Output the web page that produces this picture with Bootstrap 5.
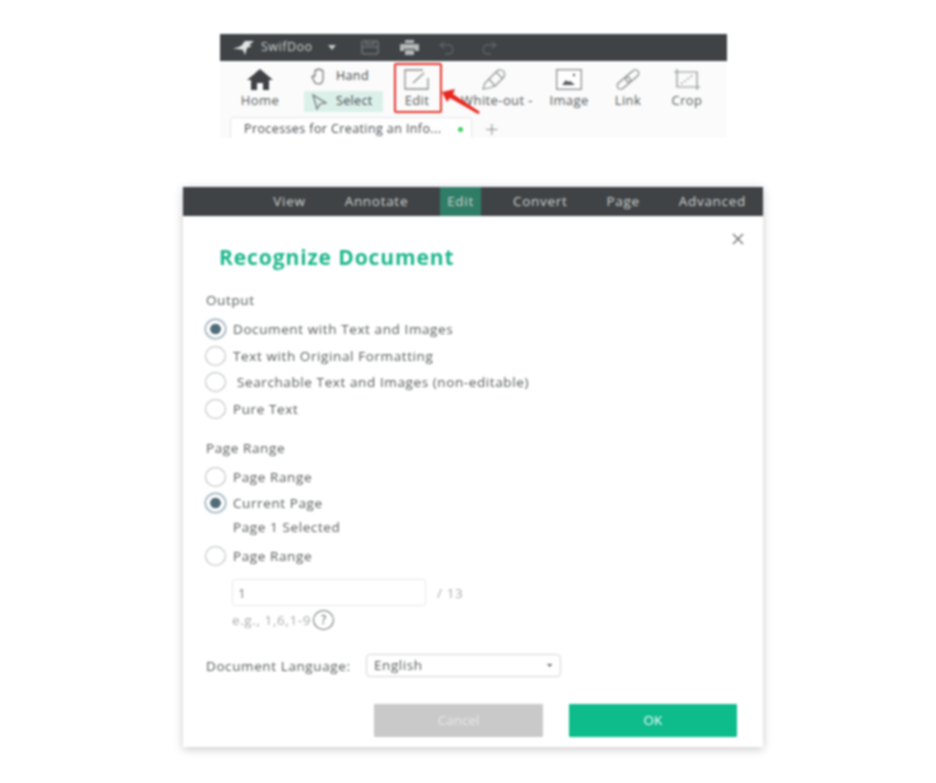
<!DOCTYPE html>
<html lang="en">
<head>
    <meta charset="UTF-8">
    <meta content="width=device-width, initial-scale=1.0" name="viewport">
    <title>Recognize Document</title>
    <link href="https://cdn.jsdelivr.net/npm/bootstrap@5.3.0/dist/css/bootstrap.min.css" rel="stylesheet">
    <style>
        body {
            background: #fff;
            color: #55585a;
            font-family: "Open Sans", "Liberation Sans", sans-serif;
            font-size: 13.5px;
            letter-spacing: .6px;
            overflow: hidden;
        }
        .shot-wrap { filter: blur(.8px); padding-top: 34px; height: 783px; }
        .app-top { width: 507px; margin-left: 220px; position: relative; height: 104px; background: #fbfbfb; overflow: visible; }
        .title-bar { height: 27px; background: #3f4345; color: #c9cbcb; padding-left: 13px; }
        .title-bar svg { display: block; }
        .ribbon-grid { display: grid; grid-template-columns: 80px 84px 66px 94px 50px 68px 50px; height: 54px; }
        .tool-item { display: flex; flex-direction: column; align-items: center; justify-content: flex-end; gap: 2px; padding-bottom: 6px; font-size: 13px; letter-spacing: .4px; line-height: 17px; color: #55585a; white-space: nowrap; }
        .tool-pair { display: flex; flex-direction: column; padding: 5px 0 0 4px; gap: 4px; font-size: 12.5px; letter-spacing: .35px; }
        .tool-row { display: flex; align-items: center; gap: 9px; height: 21px; width: 79px; padding-left: 5px; color: #44474a; }
        .tool-row.is-on { background: #dcf0ea; }
        .doc-tab { width: 242px; height: 21px; margin: 2px 0 0 10px; background: #fff; border: 1px solid #e6e6e6; border-bottom: 0; border-radius: 4px 4px 0 0; padding: 3px 8px 0 13px; font-size: 12.5px; letter-spacing: .4px; color: #44474a; white-space: nowrap; }
        .tab-dot { width: 5px; height: 5px; border-radius: 50%; background: #3ccf5c; }
        .tab-plus { font-size: 24px; line-height: 27px; color: #8b8d8e; margin-left: 13px; font-weight: 300; }
        .red-box { position: absolute; left: 174px; top: 29px; width: 48px; height: 50px; border: 2px solid #e5332c; border-radius: 2px; }
        .red-arrow { position: absolute; left: 222px; top: 55px; }

        .dialog-wrap { width: 580px; height: 560px; margin-left: 183px; margin-top: 49px; background: #fff; box-shadow: 0 2px 9px rgba(0, 0, 0, .22); }
        .menu-bar { height: 29px; background: #3f4345; color: #cfd1d1; padding-right: 10px; gap: 25px; letter-spacing: .7px; }
        .menu-item { padding: 0 7px; line-height: 29px; }
        .menu-item.is-active { background: #2f7d66; }
        .dialog-body { padding: 0 22px; position: relative; }
        .dialog-title { color: #1eb78d; font-size: 21px; font-weight: 700; margin: 0; padding: 28px 0 0 14px; line-height: 26px; letter-spacing: .9px; }
        .close-mark { position: absolute; right: 19px; top: 17px; }
        .group-label { line-height: 18px; margin: 0 0 0 1px; }
        .radio-line { display: flex; align-items: center; gap: 7px; min-height: 20px; margin-bottom: 6.6px; padding-left: 0; }
        .radio-line .form-check-input { width: 21px; height: 20px; margin: 0; float: none; flex: none; border: 1.5px solid #b9bcbd; background-color: #fff; }
        .radio-line .form-check-input:checked { border-color: #8ea2ab; background-color: #fff; background-image: radial-gradient(circle, #4f6c79 0 5px, transparent 5.6px); box-shadow: 0 0 0 1px #d3dde0; }
        .radio-line .form-check-label { color: #55585a; line-height: 20px; }
        .indent-left { margin-left: 27px; }
        .range-input { width: 194px; height: 27px; padding: 0 5px; font-size: 13.5px; letter-spacing: .5px; color: #7d8081; border-color: #e8e8e8; border-radius: 3px; }
        .muted-note { color: #a9abac; }
        .help-mark { width: 21px; height: 20px; border: 1.5px solid #6d7072; border-radius: 50%; font-size: 12px; letter-spacing: 0; line-height: 17px; text-align: center; color: #55585a; margin-left: 2px; }
        .lang-select { width: 195px; height: 23px; padding: 0 7px; font-size: 13.5px; letter-spacing: .55px; line-height: 21px; color: #55585a; border-color: #d5d5d5; border-radius: 4px; background-image: linear-gradient(45deg, transparent 50%, #666 50%), linear-gradient(-45deg, transparent 50%, #666 50%); background-size: 3px 3px, 3px 3px; background-position: right 10px center, right 7px center; }
        .dlg-btn { height: 33px; border: 0; border-radius: 1px; font-size: 13.5px; padding: 0; line-height: 33px; color: #fff; }
        .dlg-btn.is-cancel, .dlg-btn.is-cancel:disabled { width: 169px; background: #c9c9c9; color: #e8e8e8; opacity: 1; }
        .dlg-btn.is-ok { width: 168px; background: #0dbb8b; }
    </style>
</head>
<body>
<div class="shot-wrap">
    <div class="app-top">
        <div class="title-bar d-flex align-items-center">
            <svg width="22" height="16" viewBox="0 0 22 16"><path d="M0 9 8 6 12 1 21 1 16 5 19 6 14 8 12 15 10 10 5 9Z" fill="#e2e3e3"/></svg>
            <span style="margin-left:6px;font-size:12.5px;letter-spacing:.5px">SwifDoo</span>
            <svg style="margin-left:15px" width="8" height="5" viewBox="0 0 8 5"><path d="M0 0h8L4 5Z" fill="#c9cbcb"/></svg>
            <svg style="margin-left:25px" width="18" height="15" viewBox="0 0 18 15" fill="none" stroke="#6d7173" stroke-width="1.6"><rect x="1" y="1" width="16" height="13" rx="1.5"/><path d="M1 7h16M5 1v3h8V1"/></svg>
            <svg style="margin-left:21px" width="19" height="15" viewBox="0 0 19 15"><path d="M5 0h9v3H5ZM1 4h17a1 1 0 0 1 1 1v6h-4V9H4v2H0V5a1 1 0 0 1 1-1ZM5 10h9v5H5Z" fill="#b5b7b8"/></svg>
            <svg style="margin-left:20px" width="19" height="14" viewBox="0 0 19 14" fill="none" stroke="#5f6365" stroke-width="1.3"><path d="M5 1 1 4l4 3M1 4h10a5 5 0 0 1 0 9H6"/></svg>
            <svg style="margin-left:20px" width="19" height="14" viewBox="0 0 19 14" fill="none" stroke="#5f6365" stroke-width="1.3"><path d="m14 1 4 3-4 3M18 4H8a5 5 0 0 0 0 9h5"/></svg>
        </div>
        <div class="ribbon-grid">
            <div class="tool-item">
                <svg width="26" height="21" viewBox="0 0 26 21"><path d="M13 0 26 11h-4v10h-6v-7h-6v7H4V11H0Z" fill="#3f4345"/></svg>
                <span>Home</span>
            </div>
            <div class="tool-pair">
                <div class="tool-row">
                    <svg width="20" height="18" viewBox="0 0 18 18" fill="none" stroke="#6e7173" stroke-width="1.2"><path d="M5 8V3a1 1 0 0 1 2 0V2a1 1 0 0 1 2 0v0a1 1 0 0 1 2 0v1a1 1 0 0 1 2 0v8c0 3-2 5-5 5-2 0-3-1-4-3L2 9c0-1 2-2 3 0"/></svg>
                    <span class="fw-medium" style="margin-left:-2px">Hand</span>
                </div>
                <div class="tool-row is-on">
                    <svg width="20" height="18" viewBox="0 0 18 18" fill="none" stroke="#6e7173" stroke-width="1.2"><path d="m3 2 13 8-6 1-3 5Z"/></svg>
                    <span class="fw-medium" style="margin-left:-2px">Select</span>
                </div>
            </div>
            <div class="tool-item">
                <svg width="26" height="21" viewBox="0 0 26 21" fill="none" stroke="#8a8d8f" stroke-width="1.3"><path d="M24 9v11H1V1h18M9 14 20 4"/></svg>
                <span>Edit</span>
            </div>
            <div class="tool-item">
                <svg width="26" height="21" viewBox="0 0 26 21" fill="none" stroke="#8e9193" stroke-width="1.2" style="margin-right:6px"><path d="m8 10 8-8c2-2 6-1 7 1s1 4-1 6l-8 8ZM15 3l7 7M8 10l-4 4-2 6 6-1 6-2"/></svg>
                <span>White-out -</span>
            </div>
            <div class="tool-item">
                <svg width="26" height="21" viewBox="0 0 26 21"><rect x=".7" y=".7" width="24.6" height="19.6" fill="#fff" stroke="#8a8d8f" stroke-width="1.3"/><path d="M6 16 10 11l2 2 2-1 5 4Z" fill="#55585a"/><circle cx="18" cy="6" r="1.2" fill="#55585a"/></svg>
                <span>Image</span>
            </div>
            <div class="tool-item">
                <svg width="26" height="21" viewBox="0 0 26 21" fill="none" stroke="#85888a" stroke-width="1.3"><g transform="rotate(-40 13 10.5)"><rect x="0" y="7" width="15" height="7" rx="3.5"/><rect x="11" y="7" width="15" height="7" rx="3.5"/></g></svg>
                <span>Link</span>
            </div>
            <div class="tool-item">
                <svg width="26" height="21" viewBox="0 0 26 21" fill="none" stroke="#8a8d8f" stroke-width="1.2"><path d="M3 0v18h23M0 3h23v18"/><path d="m7 15 12-9" stroke-dasharray="2 2"/></svg>
                <span>Crop</span>
            </div>
        </div>
        <div class="d-flex">
            <div class="doc-tab d-flex align-items-center justify-content-between">
                <span>Processes for Creating an Info...</span>
                <span class="tab-dot"></span>
            </div>
            <span class="tab-plus">+</span>
        </div>
        <div class="red-box"></div>
        <svg class="red-arrow" width="40" height="26" viewBox="0 0 40 26"><path d="M0 3 13 0 11 5 38 23 36 25 8 9 5 13Z" fill="#e8261f"/></svg>
    </div>

    <div class="dialog-wrap">
        <div class="menu-bar d-flex justify-content-end">
            <span class="menu-item">View</span>
            <span class="menu-item">Annotate</span>
            <span class="menu-item is-active">Edit</span>
            <span class="menu-item">Convert</span>
            <span class="menu-item">Page</span>
            <span class="menu-item">Advanced</span>
        </div>
        <div class="dialog-body">
            <svg class="close-mark" width="12" height="12" viewBox="0 0 12 12" fill="none" stroke="#66696b" stroke-width="1.3"><path d="m1 1 10 10M11 1 1 11"/></svg>
            <h1 class="dialog-title">Recognize Document</h1>
            <p class="group-label" style="margin-top:21px;margin-bottom:10px">Output</p>
            <div class="form-check radio-line">
                <input class="form-check-input" type="radio" name="outputKind" id="o1" checked>
                <label class="form-check-label" for="o1">Document with Text and Images</label>
            </div>
            <div class="form-check radio-line">
                <input class="form-check-input" type="radio" name="outputKind" id="o2">
                <label class="form-check-label" for="o2">Text with Original Formatting</label>
            </div>
            <div class="form-check radio-line">
                <input class="form-check-input" type="radio" name="outputKind" id="o3">
                <label class="form-check-label ms-1" for="o3">Searchable Text and Images (non-editable)</label>
            </div>
            <div class="form-check radio-line">
                <input class="form-check-input" type="radio" name="outputKind" id="o4">
                <label class="form-check-label" for="o4">Pure Text</label>
            </div>
            <p class="group-label" style="margin-top:20px;margin-bottom:10px">Page Range</p>
            <div class="form-check radio-line">
                <input class="form-check-input" type="radio" name="rangeKind" id="r1">
                <label class="form-check-label" for="r1">Page Range</label>
            </div>
            <div class="form-check radio-line" style="margin-bottom:5px">
                <input class="form-check-input" type="radio" name="rangeKind" id="r2" checked>
                <label class="form-check-label" for="r2">Current Page</label>
            </div>
            <div style="line-height:18px;margin-bottom:10px;margin-left:28px">Page 1 Selected</div>
            <div class="form-check radio-line" style="margin-bottom:13px">
                <input class="form-check-input" type="radio" name="rangeKind" id="r3">
                <label class="form-check-label" for="r3">Page Range</label>
            </div>
            <div class="d-flex align-items-center indent-left">
                <input class="form-control range-input" type="text" value="1">
                <span class="muted-note" style="margin-left:11px">/ 13</span>
            </div>
            <div class="d-flex align-items-center indent-left muted-note" style="height:20px;margin-top:4px">
                <span>e.g., 1,6,1-9</span><span class="help-mark">?</span>
            </div>
            <div class="d-flex align-items-center" style="margin-top:24px">
                <span class="flex-shrink-0" style="width:161px;white-space:nowrap;padding-left:1px">Document Language:</span>
                <select class="form-select lang-select"><option>English</option></select>
            </div>
            <div class="d-flex justify-content-end" style="gap:26px;margin-top:27px;margin-right:4px">
                <button class="btn dlg-btn is-cancel" type="button" disabled>Cancel</button>
                <button class="btn dlg-btn is-ok" type="button">OK</button>
            </div>
        </div>
    </div>
</div>
<script src="https://cdn.jsdelivr.net/npm/bootstrap@5.3.0/dist/js/bootstrap.bundle.min.js"></script>
</body>
</html>
